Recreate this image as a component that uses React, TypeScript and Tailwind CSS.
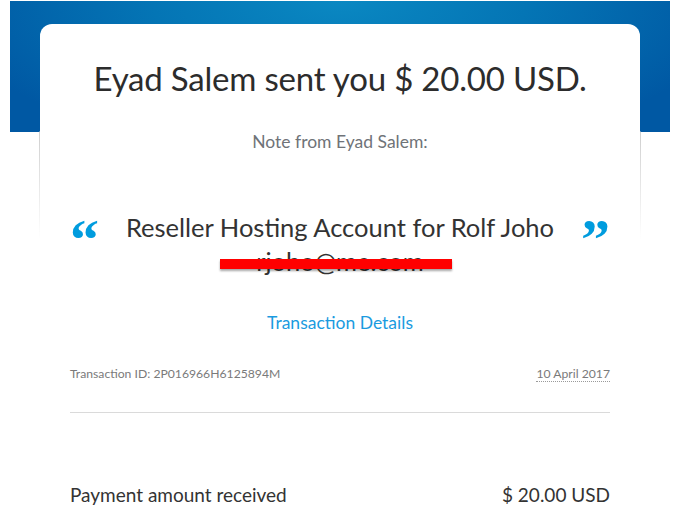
import React from 'react';

export default function App() {
  return (
    <div className="w-[679px] h-[516px] overflow-hidden bg-white font-['Lato',sans-serif] pt-px">
      {/* blue banner */}
      <div className="ml-[10px] w-[660px] h-[131px] bg-[radial-gradient(ellipse_at_50%_0%,#0a88c2_0%,#0475b5_40%,#0058a3_85%)]" />

      {/* card */}
      <div className="-mt-[108px] ml-[39px] w-[602px] px-px rounded-t-[13px] bg-[linear-gradient(to_bottom,transparent_0,transparent_107px,#cfcfcf_108px,#fff_215px)]">
        <div className="bg-white rounded-t-[12px] px-[30px] pt-[34px]">
          <h1 className="text-center text-[33px] leading-[40px] text-[#2c2c2c] tracking-[-0.2px]">
            Eyad Salem sent you $ 20.00 USD.
          </h1>

          <p className="mt-[34px] text-center text-[17.5px] leading-[20px] text-[#6f7378]">
            Note from Eyad Salem:
          </p>

          <div className="relative mt-[58px] flex items-start justify-between">
            <span className="mt-[1px] text-[58px] leading-[58px] font-bold text-[#009cde] font-['Liberation_Serif',serif]">“</span>
            <div className="flex flex-col items-center">
              <span className="text-[25.5px] leading-[34px] text-[#333]">Reseller Hosting Account for Rolf Joho</span>
              <span className="text-[25.5px] leading-[34px] text-[#333]">rjoho@me.com</span>
            </div>
            <span className="mt-[1px] text-[58px] leading-[58px] font-bold text-[#009cde] font-['Liberation_Serif',serif]">”</span>
            <span className="absolute left-[150px] top-[49px] w-[232px] h-[10px] bg-[#ff0000] shadow-[0_2px_2px_rgba(0,0,0,0.35)]" />
          </div>

          <p className="mt-[35px] text-center text-[17.5px] leading-[20px] text-[#1a9be0]">Transaction Details</p>

          <div className="mt-[34px] flex justify-between text-[12.2px] leading-[14px] text-[#7a7a7a]">
            <span>Transaction ID: 2P016966H6125894M</span>
            <span className="border-b border-dotted border-[#9a9a9a]">10 April 2017</span>
          </div>

          <div className="mt-[30px] h-px bg-[#dadada]" />

          <div className="mt-[71px] flex justify-between text-[19px] leading-[22px] text-[#333]">
            <span>Payment amount received</span>
            <span>$ 20.00 USD</span>
          </div>
        </div>
      </div>
    </div>
  );
}
